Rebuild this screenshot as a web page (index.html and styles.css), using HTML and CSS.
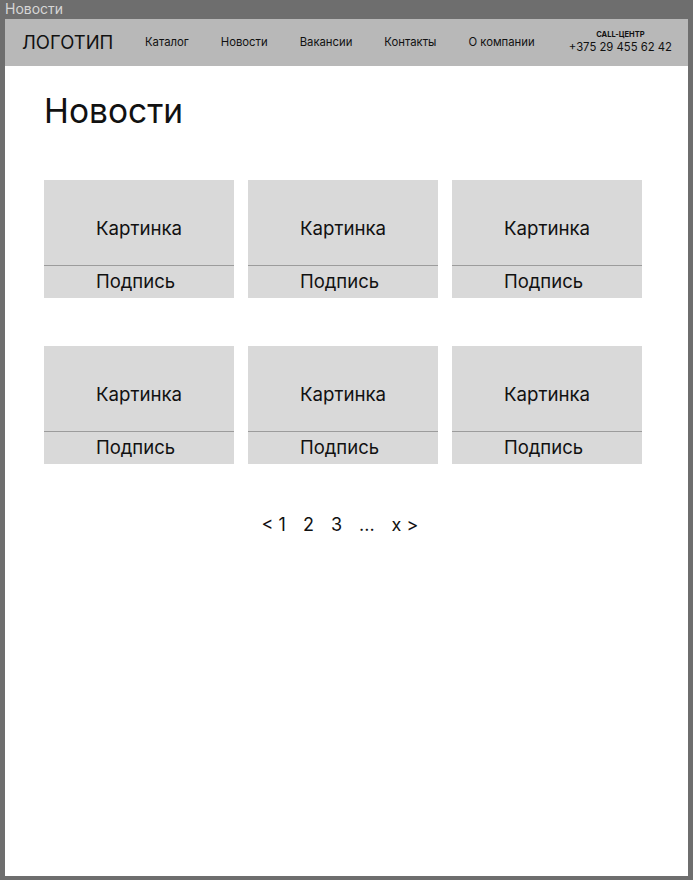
FILE: index.html
```html
<!DOCTYPE html>
<html lang="ru">
<head>
<meta charset="utf-8">
<title>Новости</title>
<link rel="stylesheet" href="styles.css">
</head>
<body>
<div class="window-title">Новости</div>
<div class="frame">
  <div class="page">
    <header class="header">
      <div class="logo">ЛОГОТИП</div>
      <nav class="nav">
        <a>Каталог</a>
        <a>Новости</a>
        <a>Вакансии</a>
        <a>Контакты</a>
        <a>О компании</a>
      </nav>
      <div class="call">
        <div class="call-label">CALL-ЦЕНТР</div>
        <div class="call-phone">+375 29 455 62 42</div>
      </div>
    </header>
    <main class="main">
      <h1 class="heading">Новости</h1>
      <div class="grid">
        <div class="card"><div class="card-img">Картинка</div><div class="card-cap">Подпись</div></div>
        <div class="card"><div class="card-img">Картинка</div><div class="card-cap">Подпись</div></div>
        <div class="card"><div class="card-img">Картинка</div><div class="card-cap">Подпись</div></div>
        <div class="card"><div class="card-img">Картинка</div><div class="card-cap">Подпись</div></div>
        <div class="card"><div class="card-img">Картинка</div><div class="card-cap">Подпись</div></div>
        <div class="card"><div class="card-img">Картинка</div><div class="card-cap">Подпись</div></div>
      </div>
      <div class="pager">
        <span>&lt; 1</span><span>2</span><span>3</span><span>...</span><span>x &gt;</span>
      </div>
    </main>
  </div>
</div>
</body>
</html>
```
FILE: styles.css
```css
* { box-sizing: border-box; }
html, body { margin: 0; padding: 0; }
body {
  background: #6e6e6e;
  font-family: Inter, "Noto Sans", sans-serif;
  color: #111;
  width: 693px;
  height: 880px;
  overflow: hidden;
}
.window-title {
  height: 19px;
  line-height: 18px;
  font-size: 14px;
  color: #d6d6d6;
  padding-left: 5px;
}
.frame {
  padding: 0 5px 4px 5px;
  height: 861px;
}
.page {
  background: #fff;
  height: 857px;
}
.header {
  height: 47px;
  background: #b8b8b8;
  display: flex;
  align-items: center;
  padding-left: 17px;
  padding-bottom: 2px;
}
.logo {
  font-size: 18.5px;
  width: 123px;
}
.nav {
  display: flex;
  gap: 32px;
  font-size: 11.3px;
}
.call {
  margin-left: auto;
  margin-right: 16px;
  text-align: center;
}
.call-label {
  font-size: 7.5px;
  font-weight: 700;
  line-height: 10px;
}
.call-phone {
  font-size: 11.3px;
  line-height: 14px;
}
.main {
  padding: 0 39px;
}
.heading {
  margin: 0;
  padding-top: 24px;
  font-size: 33.5px;
  font-weight: 400;
  line-height: 42px;
  height: 114px;
}
.grid {
  display: grid;
  grid-template-columns: repeat(3, 190px);
  column-gap: 14px;
  row-gap: 48px;
}
.card { background: #d9d9d9; height: 118px; }
.card-img {
  height: 86px;
  padding-top: 11px;
  border-bottom: 1px solid #9c9c9c;
  display: flex;
  align-items: center;
  justify-content: center;
  font-size: 18.7px;
}
.card-cap {
  height: 32px;
  padding-right: 7px;
  padding-bottom: 2px;
  display: flex;
  align-items: center;
  justify-content: center;
  font-size: 18.5px;
}
.pager {
  margin-top: 50px;
  width: 604px;
  padding-right: 12px;
  display: flex;
  justify-content: center;
  gap: 17px;
  font-size: 18px;
  line-height: 22px;
}
```
